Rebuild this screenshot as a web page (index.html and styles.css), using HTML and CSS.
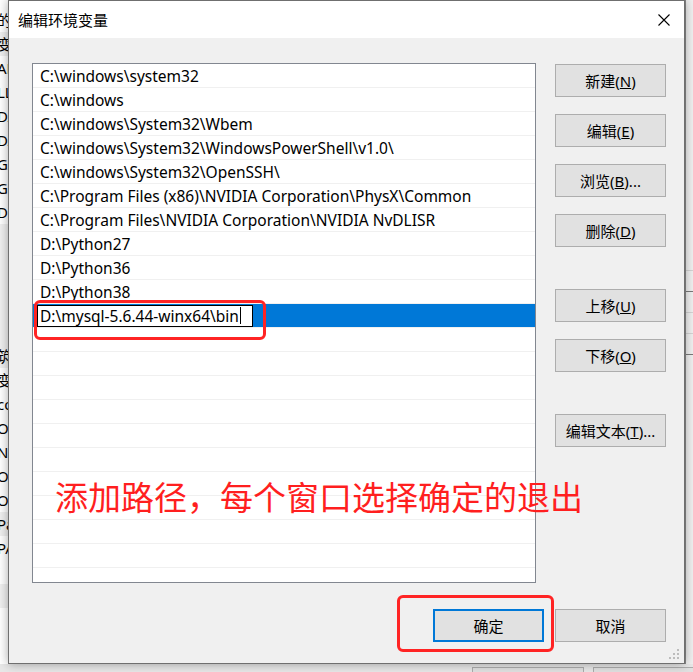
FILE: index.html
```html
<!DOCTYPE html>
<html lang="zh-CN">
<head>
    <meta charset="UTF-8">
    <meta name="viewport" content="width=device-width, initial-scale=1.0">
    <title>编辑环境变量</title>
    <link rel="stylesheet" href="styles.css">
</head>
<body>
    <div class="desktop">
        <!-- windows behind the dialog -->
        <div class="back-left">
            <div class="bl-row">的</div>
            <div class="bl-row gray">变量</div>
            <div class="bl-row">AP</div>
            <div class="bl-row">LL</div>
            <div class="bl-row">DA</div>
            <div class="bl-row">DA</div>
            <div class="bl-row">GA</div>
            <div class="bl-row">GO</div>
            <div class="bl-row">DI</div>
            <div class="bl-row gray"></div>
            <div class="bl-row gray"></div>
            <div class="bl-row gray"></div>
            <div class="bl-row gray"></div>
            <div class="bl-row gray"></div>
            <div class="bl-row gray">筑</div>
            <div class="bl-row">变</div>
            <div class="bl-row">co</div>
            <div class="bl-row">Or</div>
            <div class="bl-row">NU</div>
            <div class="bl-row">Or</div>
            <div class="bl-row">OS</div>
            <div class="bl-row gray">Pa</div>
            <div class="bl-row">PA</div>
            <div class="bl-row">'</div>
            <div class="bl-row gray"></div>
        </div>
        <div class="back-right">
            <div class="br-row"></div>
            <div class="br-row dark"></div>
            <div class="br-row"></div>
            <div class="br-row"></div>
            <div class="br-row dark"></div>
        </div>
        <div class="back-bottom">
            <span class="ghost-btn"></span>
            <span class="ghost-btn"></span>
        </div>

        <div class="dialog">
            <div class="titlebar">
                <span class="title">编辑环境变量</span>
                <span class="close">
                    <svg width="12" height="12" viewBox="0 0 12 12">
                        <path d="M0.5 0.5 L11.5 11.5 M11.5 0.5 L0.5 11.5" stroke="#000" stroke-width="1.1" fill="none"/>
                    </svg>
                </span>
            </div>

            <div class="content">
                <div class="pathlist">
                    <div class="row">C:\windows\system32</div>
                    <div class="row">C:\windows</div>
                    <div class="row">C:\windows\System32\Wbem</div>
                    <div class="row">C:\windows\System32\WindowsPowerShell\v1.0\</div>
                    <div class="row">C:\windows\System32\OpenSSH\</div>
                    <div class="row">C:\Program Files (x86)\NVIDIA Corporation\PhysX\Common</div>
                    <div class="row">C:\Program Files\NVIDIA Corporation\NVIDIA NvDLISR</div>
                    <div class="row">D:\Python27</div>
                    <div class="row">D:\Python36</div>
                    <div class="row">D:\Python38</div>
                    <div class="row selected">
                        <span class="edit">D:\mysql-5.6.44-winx64\bin<span class="caret"></span></span>
                    </div>
                    <div class="row"></div>
                    <div class="row"></div>
                    <div class="row"></div>
                    <div class="row"></div>
                    <div class="row"></div>
                    <div class="row"></div>
                    <div class="row"></div>
                    <div class="row"></div>
                    <div class="row"></div>
                    <div class="row"></div>
                    <div class="row"></div>
                </div>

                <div class="side-buttons">
                    <button>新建(<u>N</u>)</button>
                    <button>编辑(<u>E</u>)</button>
                    <button>浏览(<u>B</u>)...</button>
                    <button>删除(<u>D</u>)</button>
                    <button class="spaced">上移(<u>U</u>)</button>
                    <button>下移(<u>O</u>)</button>
                    <button class="spaced">编辑文本(<u>T</u>)...</button>
                </div>
            </div>

            <div class="footer">
                <button class="default">确定</button>
                <button>取消</button>
            </div>

            <svg class="grip" width="12" height="12" viewBox="0 0 12 12">
                <rect x="8" y="0" width="2" height="2" fill="#bcbcbc"/>
                <rect x="4" y="4" width="2" height="2" fill="#bcbcbc"/>
                <rect x="8" y="4" width="2" height="2" fill="#bcbcbc"/>
                <rect x="0" y="8" width="2" height="2" fill="#bcbcbc"/>
                <rect x="4" y="8" width="2" height="2" fill="#bcbcbc"/>
                <rect x="8" y="8" width="2" height="2" fill="#bcbcbc"/>
            </svg>
        </div>

        <!-- red annotations drawn on top of the screenshot -->
        <div class="mark mark-edit"></div>
        <div class="mark mark-ok"></div>
        <div class="note">添加路径，每个窗口选择确定的退出</div>
    </div>
</body>
</html>
```

FILE: styles.css
```css
body {
    margin: 0;
    background-color: #f0f0f0;
    font-family: "Noto Sans", "Noto Sans CJK SC", sans-serif;
    overflow: hidden;
}
.desktop {
    position: relative;
    width: 693px;
    height: 672px;
    overflow: hidden;
}

/* background windows */
.back-left {
    position: absolute;
    left: 0;
    top: 0;
    width: 40px;
    height: 672px;
    background-color: #fff;
    padding-top: 8px;
}
.bl-row {
    height: 24px;
    line-height: 24px;
    font-size: 15px;
    margin-left: -3px;
    white-space: nowrap;
    color: #000;
}
.bl-row.gray {
    background-color: #f0f0f0;
}
.back-right {
    position: absolute;
    left: 685px;
    top: 0;
    width: 20px;
    height: 672px;
    background-color: #f0f0f0;
    border-left: 1px solid #8a8a8a;
    padding-top: 250px;
}
.br-row {
    height: 20px;
    border-bottom: 1px solid #d4d4d4;
}
.br-row.dark {
    border-bottom-color: #7a7a7a;
}
.back-bottom {
    position: absolute;
    left: 0;
    top: 664px;
    width: 693px;
    height: 8px;
    background-color: #e8e8e8;
}
.ghost-btn {
    position: absolute;
    top: 3px;
    width: 110px;
    height: 20px;
    border: 1px solid #adadad;
    background-color: #e1e1e1;
}
.ghost-btn:first-child {
    left: 472px;
}
.ghost-btn:last-child {
    left: 593px;
}

/* dialog */
.dialog {
    position: absolute;
    left: 8px;
    top: 0;
    width: 677px;
    height: 664px;
    box-sizing: border-box;
    border: 1px solid #6f6f6f;
    background-color: #f0f0f0;
    box-shadow: 0 0 10px rgba(0, 0, 0, 0.35);
    display: flex;
    flex-direction: column;
}
.titlebar {
    height: 37px;
    flex-shrink: 0;
    background-color: #fff;
    display: flex;
    align-items: center;
    justify-content: space-between;
    padding-left: 9px;
}
.title {
    font-size: 15px;
    color: #000;
}
.close {
    width: 40px;
    height: 37px;
    display: flex;
    align-items: center;
    justify-content: center;
}
.content {
    display: flex;
    gap: 19px;
    padding: 25px 18px 0 23px;
}
.pathlist {
    width: 504px;
    height: 520px;
    box-sizing: border-box;
    border: 1px solid #828790;
    background-color: #fff;
    overflow: hidden;
}
.row {
    height: 22px;
    line-height: 23px;
    padding-top: 1px;
    border-bottom: 1px solid #f0f0f0;
    padding-left: 7px;
    font-size: 15.5px;
    color: #000;
    white-space: nowrap;
    overflow: hidden;
}
.row.selected {
    background-color: #0078d7;
    padding-left: 4px;
    padding-top: 0;
    height: 23px;
    display: flex;
    align-items: center;
}
.edit {
    width: 216px;
    height: 22px;
    line-height: 20px;
    box-sizing: border-box;
    border: 1px solid #000;
    background-color: #fff;
    padding-left: 2px;
    display: flex;
    align-items: center;
}
.caret {
    display: inline-block;
    width: 1px;
    height: 17px;
    background-color: #000;
    margin-left: 1px;
}

.side-buttons {
    display: flex;
    flex-direction: column;
    gap: 17px;
    padding-top: 1px;
}
button {
    width: 111px;
    height: 33px;
    box-sizing: border-box;
    border: 1px solid #adadad;
    background-color: #e1e1e1;
    font-family: "Noto Sans", "Noto Sans CJK SC", sans-serif;
    font-size: 15px;
    color: #000;
    padding: 0;
}
.side-buttons .spaced {
    margin-top: 25px;
}
.footer {
    display: flex;
    justify-content: flex-end;
    gap: 11px;
    padding-right: 18px;
    margin-top: 26px;
}
button.default {
    border: 2px solid #0078d7;
}
.grip {
    position: absolute;
    right: 3px;
    bottom: 2px;
}

/* annotations */
.mark {
    position: absolute;
    box-sizing: border-box;
    border: 3px solid #ff2424;
    border-radius: 6px;
}
.mark-edit {
    left: 34px;
    top: 300px;
    width: 232px;
    height: 40px;
}
.mark-ok {
    left: 397px;
    top: 595px;
    width: 157px;
    height: 57px;
}
.note {
    position: absolute;
    left: 55px;
    top: 480px;
    font-family: "Noto Sans CJK SC", sans-serif;
    font-size: 33px;
    line-height: 33px;
    color: #ff1f1f;
    white-space: nowrap;
}
```
